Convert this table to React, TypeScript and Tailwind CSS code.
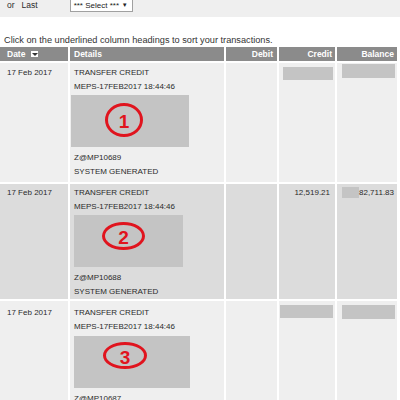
import React from 'react'

type Txn = {
  ref: string
  num: string
  credit?: string
  balance?: string
  rowBg: string
  rowH: string
  pt: string
  boxMt: string
  boxMl: string
  boxW: string
  circle: string
}

const rows: Txn[] = [
  {
    ref: 'Z@MP10689',
    num: '1',
    rowBg: 'bg-[#efefef]',
    rowH: 'h-[119px]',
    pt: 'pt-[3px]',
    boxMt: 'mt-[1px]',
    boxMl: 'ml-[1px]',
    boxW: 'w-[118px]',
    circle: 'left-[34px] top-[8px] w-[38px] h-[34px]',
  },
  {
    ref: 'Z@MP10688',
    num: '2',
    credit: '12,519.21',
    balance: '82,711.83',
    rowBg: 'bg-[#dcdcdc]',
    rowH: 'h-[115px]',
    pt: 'pt-[2px]',
    boxMt: 'mt-[1px]',
    boxMl: 'ml-[4px]',
    boxW: 'w-[109px]',
    circle: 'left-[28px] top-[7px] w-[43px] h-[28px]',
  },
  {
    ref: 'Z@MP10687',
    num: '3',
    rowBg: 'bg-[#efefef]',
    rowH: 'h-[120px]',
    pt: 'pt-[5px]',
    boxMt: 'mt-[2px]',
    boxMl: 'ml-[4px]',
    boxW: 'w-[116px]',
    circle: 'left-[29px] top-[6px] w-[44px] h-[27px]',
  },
]

function Header() {
  const cell = 'h-[14px] bg-[#8b8b8b] text-white font-bold text-[8.5px] leading-[14px]'
  return (
    <>
      <div className={`${cell} pl-[7px] flex items-center gap-[6px]`}>
        <span>Date</span>
        <span className="w-[7px] h-[6px] bg-white flex items-center justify-center">
          <span className="w-0 h-0 border-l-[3px] border-r-[3px] border-t-[3px] border-l-transparent border-r-transparent border-t-[#333]" />
        </span>
      </div>
      <div className={`${cell} pl-[4px]`}>Details</div>
      <div className={`${cell} text-right pr-[4px]`}>Debit</div>
      <div className={`${cell} text-right pr-[3px]`}>Credit</div>
      <div className={`${cell} text-right pr-[3px]`}>Balance</div>
    </>
  )
}

function Row({ t, first }: { t: Txn; first: boolean }) {
  const base = `${t.rowBg} ${t.rowH} overflow-hidden`
  return (
    <>
      <div className={`${base} ${t.pt} pl-[7px] leading-[14px]`}>17 Feb 2017</div>
      <div className={`${base} ${t.pt} pl-[4px] leading-[14px]`}>
        <div>TRANSFER CREDIT</div>
        <div>MEPS-17FEB2017 18:44:46</div>
        <div className={`relative h-[52px] bg-[#c4c4c4] ${t.boxMt} ${t.boxMl} ${t.boxW} -translate-x-[4px]`}>
          <div
            className={`absolute ${t.circle} rounded-[50%] border-[3px] border-[#e0141e] flex items-center justify-center`}
          >
            <span className="text-[19px] font-bold text-[#e0141e] leading-none mt-[3px]">{t.num}</span>
          </div>
        </div>
        <div className="mt-[4px]">{t.ref}</div>
        <div>SYSTEM GENERATED</div>
      </div>
      <div className={base} />
      <div className={`${base} ${t.pt}`}>
        {t.credit ? (
          <div className="text-right pr-[5px] leading-[14px]">{t.credit}</div>
        ) : (
          <div className={`${first ? 'ml-[4px] mt-[1px]' : 'ml-[1px] mt-[-1px]'} mr-[2px] h-[13px] bg-[#c4c4c4]`} />
        )}
      </div>
      <div className={`${base} ${t.credit ? 'pt-[2px]' : 'pt-[1px]'}`}>
        {t.balance ? (
          <div className="flex items-start leading-[14px]">
            <div className="ml-[5px] mt-[1px] w-[18px] h-[11px] bg-[#c4c4c4]" />
            <span className="ml-auto pr-[3px]">{t.balance}</span>
          </div>
        ) : (
          <div className={`${first ? '' : 'mt-[3px]'} ml-[5px] w-[53px] h-[14px] bg-[#c4c4c4]`} />
        )}
      </div>
    </>
  )
}

export default function App() {
  return (
    <div
      className="w-[400px] h-[400px] overflow-hidden bg-white text-[8px] text-[#2b2b2b]"
      style={{ fontFamily: '"Liberation Sans", Arial, sans-serif' }}
    >
      {/* period filter */}
      <div className="h-[17px] bg-[#efefef] overflow-hidden">
        <div className="flex items-center -mt-[1px] h-[13px] leading-[13px] text-[8.5px]">
          <span className="ml-[7px]">or</span>
          <span className="ml-[7px]">Last</span>
          <div className="ml-[32px] w-[63px] h-[13px] bg-white border border-[#a0a0a0] flex items-center pl-[3px] text-[8px] text-[#222]">
            <span>*** Select ***</span>
            <span className="ml-auto mr-[4px] text-[6px]">▼</span>
          </div>
        </div>
      </div>

      <p className="mt-[16px] h-[14px] leading-[14px] pl-[4px] text-[9.2px] text-[#333]">
        Click on the underlined column headings to sort your transactions.
      </p>

      <div className="grid grid-cols-[68px_154px_51px_56px_60px] gap-[2px]">
        <Header />
        {rows.map((t, i) => (
          <Row key={t.ref} t={t} first={i === 0} />
        ))}
      </div>
    </div>
  )
}
